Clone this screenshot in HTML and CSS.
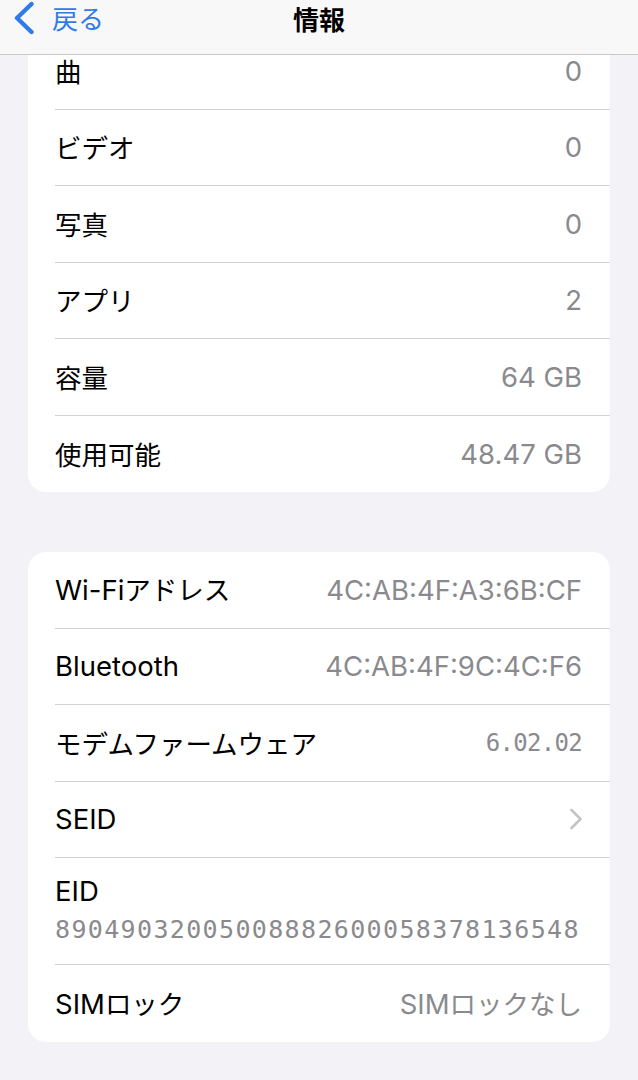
FILE: index.html
```html
<!DOCTYPE html>
<html lang="ja">
<head>
<meta charset="utf-8">
<title>情報</title>
<link rel="stylesheet" href="styles.css">
</head>
<body>
<div class="screen">
  <header class="nav">
    <div class="back">
      <svg class="back-chevron" width="24" height="34" viewBox="0 0 24 34"><path d="M19.5 3 L5 17 L19.5 31" fill="none" stroke="#2f7bea" stroke-width="4.4" stroke-linecap="round" stroke-linejoin="round"/></svg>
      <span class="back-label">戻る</span>
    </div>
    <div class="title">情報</div>
  </header>
  <main class="content">
    <section class="card">
      <div class="row"><div class="row-inner"><span class="label ja">曲</span><span class="value">0</span></div></div>
      <div class="row"><div class="row-inner"><span class="label ja">ビデオ</span><span class="value">0</span></div></div>
      <div class="row"><div class="row-inner"><span class="label ja">写真</span><span class="value">0</span></div></div>
      <div class="row"><div class="row-inner"><span class="label ja">アプリ</span><span class="value">2</span></div></div>
      <div class="row"><div class="row-inner"><span class="label ja">容量</span><span class="value">64 GB</span></div></div>
      <div class="row last"><div class="row-inner"><span class="label ja">使用可能</span><span class="value">48.47 GB</span></div></div>
    </section>
    <section class="card">
      <div class="row"><div class="row-inner"><span class="label">Wi-Fi<span class="ja">アドレス</span></span><span class="value">4C:AB:4F:A3:6B:CF</span></div></div>
      <div class="row"><div class="row-inner"><span class="label">Bluetooth</span><span class="value">4C:AB:4F:9C:4C:F6</span></div></div>
      <div class="row"><div class="row-inner"><span class="label ja">モデムファームウェア</span><span class="value mono">6.02.02</span></div></div>
      <div class="row"><div class="row-inner"><span class="label">SEID</span>
        <svg class="chevron" width="14" height="22" viewBox="0 0 14 22"><path d="M2.5 2 L11.5 11 L2.5 20" fill="none" stroke="#c4c4c7" stroke-width="2.6" stroke-linecap="round" stroke-linejoin="round"/></svg>
      </div></div>
      <div class="row tall"><div class="row-inner stack"><span class="label">EID</span><span class="value eid">89049032005008882600058378136548</span></div></div>
      <div class="row last"><div class="row-inner"><span class="label">SIM<span class="ja">ロック</span></span><span class="value">SIM<span class="ja">ロックなし</span></span></div></div>
    </section>
  </main>
</div>
</body>
</html>
```
FILE: styles.css
```css
* { box-sizing: border-box; }
html, body { margin: 0; padding: 0; }
body {
  background: #f2f2f7;
  font-family: Inter, "Noto Sans CJK JP", sans-serif;
  color: #000;
  width: 638px;
  height: 1080px;
  overflow: hidden;
}
.screen { position: relative; width: 638px; height: 1080px; overflow: hidden; }
.nav {
  position: absolute;
  top: 0; left: 0; right: 0;
  height: 55px;
  background: rgba(248, 248, 248, 0.97);
  border-bottom: 1px solid #c9c9cb;
  display: flex;
  align-items: center;
  justify-content: center;
  z-index: 2;
}
.back {
  position: absolute;
  left: 12px;
  top: 1px;
  height: 34px;
  display: flex;
  align-items: center;
  gap: 16px;
  color: #2f7bea;
}
.back-label {
  font-family: "Noto Sans CJK JP", sans-serif;
  font-size: 26px;
  line-height: 1;
}
.title {
  font-family: "Noto Sans CJK JP", sans-serif;
  font-weight: 700;
  font-size: 26px;
  line-height: 1;
  margin-top: -17px;
}
.content {
  padding: 33px 28px 0 28px;
  display: flex;
  flex-direction: column;
  gap: 60px;
}
.card {
  background: #fff;
  border-radius: 18px;
  overflow: hidden;
}
.row { padding-left: 27px; }
.row-inner {
  height: 76.5px;
  padding-right: 28px;
  display: flex;
  align-items: center;
  justify-content: space-between;
  border-bottom: 1px solid #d1d1d6;
}
.row.last .row-inner { border-bottom: none; }
.row.tall .row-inner { height: 107px; }
.stack {
  flex-direction: column;
  align-items: flex-start;
  justify-content: flex-start;
  padding-top: 15px;
  gap: 3px;
}
.label {
  font-size: 27.5px;
  line-height: 36px;
}
.ja {
  font-family: "Noto Sans CJK JP", sans-serif;
  font-size: 26.5px;
}
.value {
  font-size: 27.5px;
  line-height: 36px;
  color: #8a8a8e;
}
.mono {
  font-family: "DejaVu Sans Mono", monospace;
  font-size: 24px;
  letter-spacing: -0.7px;
}
.eid {
  font-family: "DejaVu Sans Mono", monospace;
  font-size: 25px;
  letter-spacing: 1.35px;
}
.chevron { display: block; margin-right: -1px; }
```
